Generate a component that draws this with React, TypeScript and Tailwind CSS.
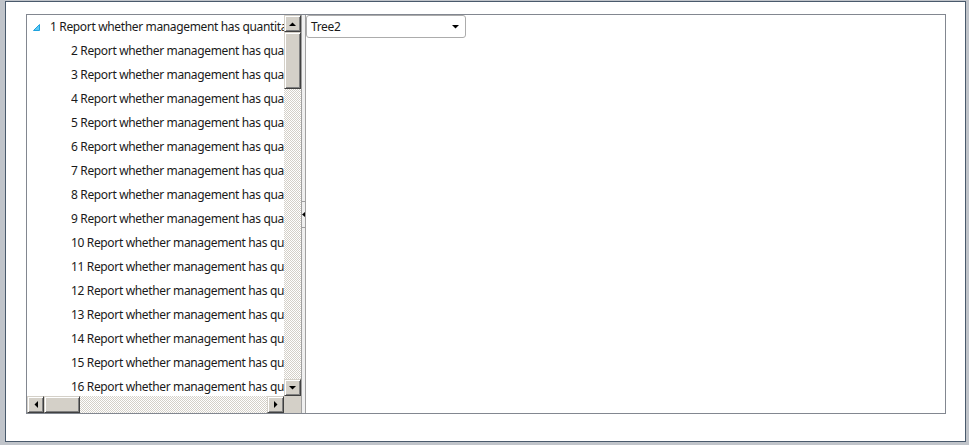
import React from 'react';

const ITEM_TEXT = 'Report whether management has quantitative and qualitative measures in place';

const bevel =
    'bg-[#d4d0c8] border border-t-[#d4d0c8] border-l-[#d4d0c8] border-r-[#404040] border-b-[#404040] shadow-[inset_1px_1px_0_#ffffff,inset_-1px_-1px_0_#808080]';

const track = 'bg-[repeating-conic-gradient(#d4d0c8_0%_25%,#ffffff_0%_50%)] bg-size-[2px_2px]';

type Dir = 'up' | 'down' | 'left' | 'right';

const Arrow: React.FC<{ dir: Dir }> = ({ dir }) => {
    const pts: Record<Dir, string> = {
        up: '0,4 7,4 3.5,0.5',
        down: '0,0 7,0 3.5,3.5',
        left: '4,0 4,7 0.5,3.5',
        right: '0,0 0,7 3.5,3.5',
    };
    const vertical = dir === 'up' || dir === 'down';
    return (
        <svg width={vertical ? 7 : 4} height={vertical ? 4 : 7} viewBox={vertical ? '0 0 7 4' : '0 0 4 7'}>
            <polygon points={pts[dir]} fill="#000" />
        </svg>
    );
};

const ScrollButton: React.FC<{ dir: Dir }> = ({ dir }) => (
    <div className={`${bevel} w-[17px] h-[17px] shrink-0 flex items-center justify-center`}>
        <Arrow dir={dir} />
    </div>
);

// expanded-node glyph of the root item
const ExpandedGlyph = () => (
    <svg width="7" height="7" viewBox="0 0 7 7">
        <polygon points="6.5,0.5 6.5,6.5 0.5,6.5" fill="#5fc9f3" stroke="#1fa2de" strokeWidth="1" />
    </svg>
);

const TreeRow: React.FC<{ n: number; root?: boolean }> = ({ n, root }) => (
    <div className="h-6 flex items-center whitespace-nowrap">
        {root ? (
            <div className="w-[23px] shrink-0 pl-[6px] flex items-center">
                <ExpandedGlyph />
            </div>
        ) : (
            <div className="w-[44px] shrink-0" />
        )}
        <span className="min-w-0 overflow-hidden">
            {n} {ITEM_TEXT}
        </span>
    </div>
);

export default function App() {
    const rows = Array.from({ length: 16 }, (_, i) => i + 1);

    return (
        <div
            className="w-[969px] h-[445px] bg-[#c0c4ca] pl-[5px] pr-[3px] pt-px pb-[3px] flex text-[12px] tracking-[-0.35px] text-[#1a1a1a]"
            style={{ fontFamily: '"Segoe UI", "Noto Sans", sans-serif' }}
        >
            <div className="flex-1 border border-[#4a5a6c] bg-white pl-5 pr-[19px] pt-3 pb-[27px] flex">
                <div className="flex-1 border border-[#828790] flex">
                    {/* tree pane with scrollbars */}
                    <div className="w-[274px] flex flex-col">
                        <div className="flex-1 flex min-h-0">
                            <div className="w-[257px] overflow-hidden">
                                {rows.map(n => (
                                    <TreeRow key={n} n={n} root={n === 1} />
                                ))}
                            </div>
                            <div className={`w-[17px] flex flex-col ${track}`}>
                                <ScrollButton dir="up" />
                                <div className={`${bevel} h-[57px]`} />
                                <div className="flex-1" />
                                <ScrollButton dir="down" />
                            </div>
                        </div>
                        <div className="h-[17px] flex">
                            <div className={`w-[257px] flex ${track}`}>
                                <ScrollButton dir="left" />
                                <div className={`${bevel} w-[36px]`} />
                                <div className="flex-1" />
                                <ScrollButton dir="right" />
                            </div>
                            <div className="w-[17px] bg-[#d4d0c8]" />
                        </div>
                    </div>

                    {/* splitter */}
                    <div className="w-[5px] bg-[#f0f0f0] border-l border-r border-[#a0a0a0] flex items-center">
                        <div className="h-[27px] w-full border-t border-b border-[#a0a0a0] flex items-center justify-center">
                            <svg width="3" height="5" viewBox="0 0 3 5">
                                <polygon points="3,0 3,5 0,2.5" fill="#000" />
                            </svg>
                        </div>
                    </div>

                    {/* detail pane */}
                    <div className="flex-1">
                        <div className="w-[160px] h-[23px] border border-[#acacac] rounded-[3px] bg-white flex items-center justify-between pl-1 pr-[6px]">
                            <span>Tree2</span>
                            <Arrow dir="down" />
                        </div>
                    </div>
                </div>
            </div>
        </div>
    );
}
